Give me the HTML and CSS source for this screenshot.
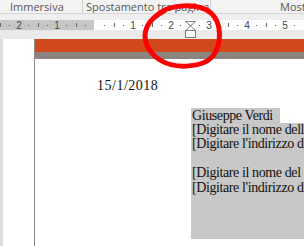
FILE: index.html
```html
<!DOCTYPE html>
<html lang="it">
<head>
    <meta charset="UTF-8">
    <meta name="viewport" content="width=device-width, initial-scale=1.0">
    <title>Documento</title>
    <link rel="stylesheet" href="styles.css">
</head>
<body>

    <!-- Gruppi della barra multifunzione -->
    <div class="tabs">
        <div class="tab tab-immersiva">Immersiva</div>
        <div class="tab tab-spostamento">Spostamento tra pagine</div>
        <div class="tab tab-mostra">Mostra</div>
    </div>

    <div class="gap"></div>

    <!-- Righello -->
    <div class="ruler">
        <div class="scale">
            <span class="c h"></span><span class="c d"></span><span class="c">2</span><span class="c d"></span>
            <span class="c h"></span><span class="c d"></span><span class="c">1</span><span class="c d"></span>
            <span class="c h"></span><span class="c d"></span><span class="c"></span><span class="c d"></span>
            <span class="c h"></span><span class="c d"></span><span class="c">1</span><span class="c d"></span>
            <span class="c h"></span><span class="c d"></span><span class="c">2</span><span class="c d"></span>
            <span class="c h"></span><span class="c d"></span><span class="c">3</span><span class="c d"></span>
            <span class="c h"></span><span class="c d"></span><span class="c">4</span><span class="c d"></span>
            <span class="c h"></span><span class="c d"></span><span class="c">5</span><span class="c d"></span>
            <span class="c h"></span>
        </div>
        <!-- Indicatore del rientro -->
        <svg class="indent" width="11" height="18" viewBox="0 0 11 18">
            <path d="M0.5 0.5 H10.5 L5.5 5 L10.5 9.5 H0.5 L5.5 5 Z" fill="#fff" stroke="#7f7f7f"/>
            <rect x="0.5" y="9.5" width="10" height="7" fill="#fff" stroke="#7f7f7f"/>
        </svg>
    </div>

    <div class="gap2"></div>

    <!-- Pagina -->
    <div class="doc">
        <div class="strip"></div>
        <div class="margin"></div>
        <div class="edge"></div>
        <div class="page">
            <div class="band-orange"></div>
            <div class="band-gray"></div>
            <p class="date">15/1/2018</p>
            <div class="address">
                <div class="first"><span class="hl">Giuseppe Verdi</span></div>
                <div class="block">
                    <div class="line">[Digitare il nome della società]</div>
                    <div class="line">[Digitare l'indirizzo della società]</div>
                    <div class="line">&nbsp;</div>
                    <div class="line">[Digitare il nome del destinatario]</div>
                    <div class="line">[Digitare l'indirizzo del destinatario]</div>
                </div>
            </div>
        </div>
    </div>

    <!-- Cerchio rosso disegnato a mano -->
    <svg class="mark" width="304" height="246" viewBox="0 0 304 246">
        <path d="M156 16 C168 4 198 2 211 13 C222 23 222 44 213 56 C204 67 176 70 160 60 C147 52 142 38 147 27 C150 20 156 15 164 11"
              fill="none" stroke="#ff0000" stroke-width="5" stroke-linecap="round" stroke-linejoin="round"/>
    </svg>

</body>
</html>
```

FILE: styles.css
```css
body { margin: 0; width: 304px; height: 246px; overflow: hidden; position: relative; background: #eaeaea; font-family: "Open Sans", sans-serif; }

.tabs { display: flex; height: 13px; background: #f3f3f3; border-bottom: 1px solid #d6d6d6; }
.tab { flex: none; font-size: 11px; line-height: 13px; color: #555; white-space: nowrap; overflow: hidden; }
.tab-immersiva { width: 72px; padding-left: 10px; }
.tab-spostamento { width: 124px; padding-left: 3px; border-left: 1px solid #d2d2d2; }
.tab-mostra { flex: 1; min-width: 0; padding-left: 69px; border-left: 1px solid #d2d2d2; }

.gap { height: 6px; background: #efefef; }

.ruler { position: relative; height: 10px; background: linear-gradient(to right, #c6c6c6 94px, #fff 94px); }
.scale { display: flex; height: 10px; margin-left: -4.75px; }
.c { flex: none; width: 9.5px; display: flex; justify-content: center; align-items: center; font-family: "Liberation Sans", sans-serif; font-size: 10px; color: #444; }
.d::before { content: ""; width: 1px; height: 1px; background: #666; }
.h::before { content: ""; width: 1px; height: 4px; background: #666; }
.indent { position: absolute; left: 185px; top: 1px; }

.gap2 { height: 9px; background: #eaeaea; }

.doc { display: flex; height: 207px; }
.strip { width: 3px; background: #dcdcdc; }
.margin { width: 31px; background: #fff; }
.edge { width: 1px; background: #8a8a8a; }
.page { flex: 1; background: #fff; overflow: hidden; font-family: "Liberation Serif", serif; color: #111; }
.band-orange { height: 13px; background: #d24a1c; }
.band-gray { height: 7px; background: #8b8480; }

.date { margin: 19px 0 0 62px; font-size: 14px; line-height: 16px; letter-spacing: 0.5px; }
.address { margin: 14px 0 0 156px; font-size: 14px; letter-spacing: -0.4px; }
.first { height: 15px; line-height: 15px; }
.hl { display: inline-block; width: 88px; padding-left: 1px; background: #c8c8c8; }
.block { background: #c8c8c8; padding: 0 0 44px 1px; }
.line { line-height: 14.4px; white-space: nowrap; }

.mark { position: absolute; left: 0; top: 0; pointer-events: none; }
```
